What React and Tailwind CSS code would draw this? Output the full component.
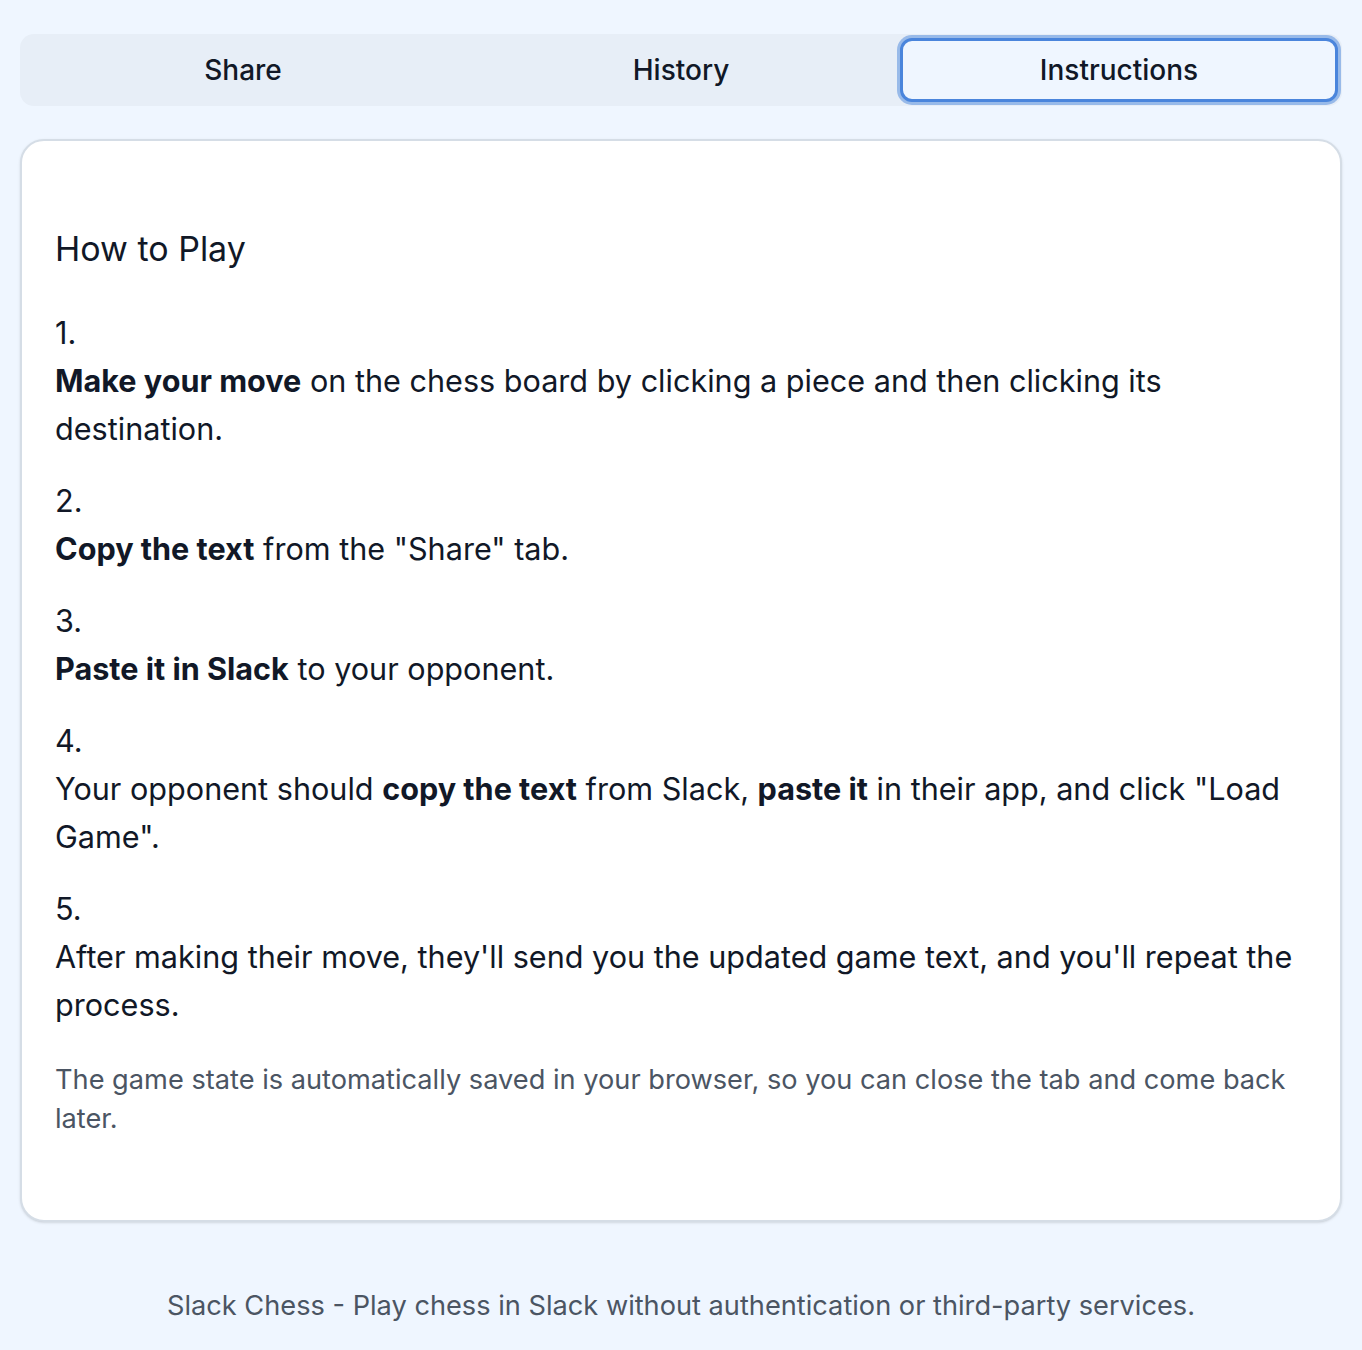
export default function App() {
  const items = [
    <>
      <b className="font-bold">Make your move</b> on the chess board by clicking a piece and then clicking its destination.
    </>,
    <>
      <b className="font-bold">Copy the text</b> from the "Share" tab.
    </>,
    <>
      <b className="font-bold">Paste it in Slack</b> to your opponent.
    </>,
    <>
      Your opponent should <b className="font-bold">copy the text</b> from Slack, <b className="font-bold">paste it</b> in their app, and click "Load Game".
    </>,
    <>After making their move, they'll send you the updated game text, and you'll repeat the process.</>,
  ];
  return (
    <div
      className="min-h-[1350px] bg-[#eff6ff] px-[20px] pt-[34px] text-[#111827]"
      style={{ fontFamily: "Inter, 'Noto Sans', sans-serif" }}
    >
      <div className="grid grid-cols-3 rounded-[14px] bg-[#e7eef7] p-[4px]">
        <button className="h-[64px] rounded-[10px] text-[28px] font-medium text-[#111827]">Share</button>
        <button className="h-[64px] rounded-[10px] text-[28px] font-medium text-[#111827]">History</button>
        <button className="h-[64px] rounded-[12px] border-[3px] border-[#4a85dc] bg-[#eff6ff] text-[28px] font-medium text-[#111827] ring-[3px] ring-[#4a85dc]/50">
          Instructions
        </button>
      </div>

      <div className="mt-[33px] rounded-[24px] border-2 border-[#d5dde6] bg-white px-[33px] pb-[82px] pt-[84px] shadow-sm">
        <h2 className="text-[34px] leading-[48px] font-normal text-[#111827]">How to Play</h2>
        <ol className="mt-[36px] flex flex-col gap-[24px]">
          {items.map((it, i) => (
            <li key={i} className="text-[30.6px] leading-[48px] text-[#111827]">
              <div>{i + 1}.</div>
              <div>{it}</div>
            </li>
          ))}
        </ol>
        <p className="mt-[31px] text-[27.2px] leading-[39px] text-[#4b5563]">
          The game state is automatically saved in your browser, so you can close the tab and come back later.
        </p>
      </div>

      <footer className="pt-[64px] text-center text-[27.2px] leading-[40px] text-[#4b5563]">
        Slack Chess - Play chess in Slack without authentication or third-party services.
      </footer>
    </div>
  );
}
